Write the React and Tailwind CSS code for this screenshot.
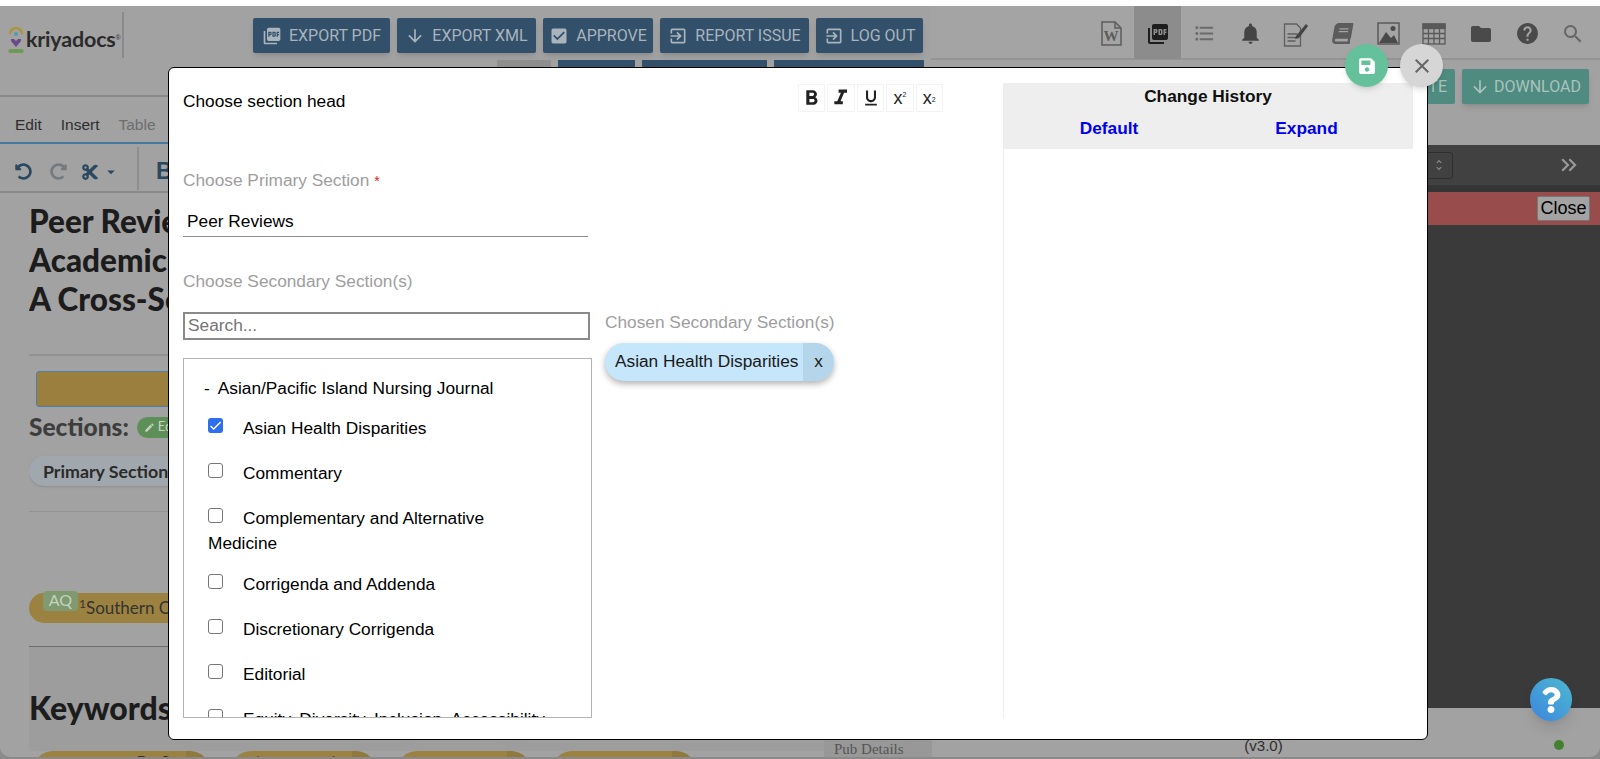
import {
  MdPictureAsPdf, MdArrowDownward, MdCheckBox, MdExitToApp, MdFormatListBulleted, MdNotifications,
  MdFolder, MdHelp, MdSearch, MdClose, MdArrowDropDown,
  MdEdit, MdFormatBold, MdFormatItalic, MdFormatUnderlined, MdKeyboardDoubleArrowRight, MdUnfoldMore, MdCheck,
} from 'react-icons/md'
import { FaSave, FaBook, FaQuestion, FaUndoAlt, FaRedoAlt, FaCut } from 'react-icons/fa'

const TOP_BUTTONS = [
  { label: 'EXPORT PDF', icon: MdPictureAsPdf, w: 'w-[137px]' },
  { label: 'EXPORT XML', icon: MdArrowDownward, w: 'w-[139px]' },
  { label: 'APPROVE', icon: MdCheckBox, w: 'w-[110px]' },
  { label: 'REPORT ISSUE', icon: MdExitToApp, w: 'w-[149px]' },
  { label: 'LOG OUT', icon: MdExitToApp, w: 'w-[107px]' },
]

const SECTIONS = [
  { label: 'Commentary' },
  { label: 'Complementary and Alternative Medicine', tight: true },
  { label: 'Corrigenda and Addenda' },
  { label: 'Discretionary Corrigenda' },
  { label: 'Editorial' },
  { label: 'Equity, Diversity, Inclusion, Accessibility' },
]

const FORMAT_BOX = 'w-[27.4px] h-[28px] border border-[#f3f3f3] flex items-center justify-center'

function Logo() {
  return (
    <div className="flex items-center pl-[8px] pt-[8px]">
      <svg width="16" height="28" viewBox="0 0 16 28" className="mr-[2px] shrink-0">
        <path d="M2 9a6 6 0 0 1 12 0" fill="none" stroke="#a8973e" strokeWidth="2.6" />
        <circle cx="8" cy="9" r="2" fill="#4a9fb0" />
        <path d="M3 14h3l2 2 2-2h3v2l-5 6-5-6z" fill="#6a4a8a" />
        <rect x="0.5" y="24" width="15" height="4" rx="1.5" fill="#6f9a55" />
      </svg>
      <span className="text-[21.5px] font-bold text-[#2b2b2b] font-['Lato',sans-serif] tracking-[-0.2px]">kriyadocs</span>
      <span className="text-[7px] text-[#333] self-start mt-[10px]">®</span>
    </div>
  )
}

function HeaderIcons() {
  const slot = 'w-[46px] flex justify-center mt-[3px]'
  return (
    <div className="ml-auto w-[669px] h-full bg-[#a4a4a4] border-b-2 border-[#949494] flex items-center justify-end pr-[4px]">
      <div className={slot}>
        <svg width="21" height="25" viewBox="0 0 21 25" fill="none" stroke="#5c5c5c" strokeWidth="1.5">
          <path d="M1 1h13l6 6v17H1z" />
          <path d="M14 1v6h6" />
          <text x="10" y="20" fontSize="15" fontWeight="700" fontFamily="Liberation Serif, serif" textAnchor="middle" fill="#5c5c5c" stroke="none">W</text>
        </svg>
      </div>
      <div className="w-[47px] h-[54px] pt-[3px] bg-[#8c8c8c] flex items-center justify-center">
        <MdPictureAsPdf size={24} className="text-[#1e1e1e]" />
      </div>
      <div className={slot}><MdFormatListBulleted size={23} className="text-[#6a6a6a]" /></div>
      <div className={slot}><MdNotifications size={25} className="text-[#444]" /></div>
      <div className={slot}>
        <svg width="27" height="26" viewBox="0 0 27 26" fill="none" stroke="#5f5f5f" strokeWidth="1.3">
          <path d="M1.5 3h12l4 4v18h-16z" />
          <path d="M4.5 13h10M4.5 16.500h10M4.500 20h8" />
          <path d="M13 15l10-12 2 2-9 12-4 1z" fill="#444" stroke="none" />
        </svg>
      </div>
      <div className={slot}><FaBook size={21} className="text-[#5c5c5c] -skew-x-[10deg]" /></div>
      <div className={slot}>
        <svg width="23" height="23" viewBox="0 0 23 23" fill="none">
          <rect x="1" y="1" width="21" height="21" stroke="#555" strokeWidth="1.4" />
          <path d="M2 21l7-11 5 6 3-3 4 8z" fill="#4a4a4a" />
          <circle cx="16" cy="6.500" r="2.500" fill="#4a4a4a" />
        </svg>
      </div>
      <div className={slot}>
        <svg width="24" height="22" viewBox="0 0 24 22" fill="none" stroke="#5a5a5a" strokeWidth="1.3">
          <rect x="1" y="1" width="22" height="20" />
          <rect x="1" y="1" width="22" height="4.500" fill="#5a5a5a" />
          <path d="M1 10.500h22M1 15.500h22M6.500 5v16M12 5v16M17.500 5v16" />
        </svg>
      </div>
      <div className="w-[47px] flex justify-center mt-[3px]"><MdFolder size={24} className="text-[#4a4a4a]" /></div>
      <div className={slot}><MdHelp size={25} className="text-[#4a4a4a]" /></div>
      <div className={slot}><MdSearch size={24} className="text-[#666]" /></div>
    </div>
  )
}

function CheckRow({ label, checked, tight }) {
  return (
    <div className={`mt-[20px] leading-[25px] text-[17.3px] text-black ${tight ? 'mb-[-4px]' : ''}`}>
      <span className={`inline-block align-[1px] w-[15px] h-[15px] rounded-[3px] mr-[20px] ${checked ? 'bg-[#2f6fed]' : 'border border-[#767676] bg-white'}`}>
        {checked && <MdCheck size={15} className="text-white" />}
      </span>
      {label}
    </div>
  )
}

export default function App() {
  return (
    <div className="relative w-[1600px] h-[759px] overflow-hidden bg-[#8a8a8a] font-['Liberation_Sans',sans-serif]">
      <div className="h-[6px] bg-white" />

      {/* app behind the overlay */}
      <div className="h-[751px] bg-[#a2a2a2] rounded-b-[10px] overflow-hidden flex flex-col">
        <div className="h-[54px] flex shrink-0">
          <div className="w-[124px] h-[46px] mt-[6px] border-r-2 border-[#8a8a8a] flex items-center"><Logo /></div>
          <div className="ml-[129px] flex gap-[7px] pt-[12px]">
            {TOP_BUTTONS.map(b => (
              <div key={b.label} className={`${b.w} h-[35px] rounded-[2px] bg-[#32506a] shadow-md flex items-center justify-center gap-[7px] text-[16px] text-[#a9b4bd] font-['Roboto',sans-serif] whitespace-nowrap`}>
                <b.icon size={20} className="shrink-0" />
                <span>{b.label}</span>
              </div>
            ))}
          </div>
          <HeaderIcons />
        </div>

        <div className="flex flex-1 min-h-0">
          {/* left pane */}
          <div className="w-[1000px] flex flex-col min-h-0">
            <div className="h-[37px] shrink-0 border-b-2 border-[#8a8a8a] flex gap-[7px] pl-[497px] overflow-hidden">
              <div className="w-[54px] h-[30px] rounded-[2px] bg-[#8e8e8e] mt-[-1px]" />
              <div className="w-[77px] h-[30px] rounded-[2px] bg-[#32506a] mt-[-1px]" />
              <div className="w-[125px] h-[30px] rounded-[2px] bg-[#32506a] mt-[-1px]" />
              <div className="w-[150px] h-[30px] rounded-[2px] bg-[#32506a] mt-[-1px]" />
            </div>
            <div className="h-[47px] shrink-0 border-b-2 border-[#44799f] flex items-center gap-[19px] pl-[15px] pt-[11px] text-[15.5px] text-[#2e2e2e]">
              <span>Edit</span><span>Insert</span><span className="text-[#6e6e6e]">Table</span>
            </div>
            <div className="h-[49px] shrink-0 border-b-2 border-[#8a8a8a] flex items-center pl-[15px] pt-[8px] text-[#2a4860]">
              <FaUndoAlt size={17} />
              <FaRedoAlt size={17} className="ml-[18px] text-[#747a80]" />
              <FaCut size={18} className="ml-[14px]" />
              <MdArrowDropDown size={18} className="ml-[3px]" />
              <div className="h-[43px] mt-[-6px] border-l-2 border-[#8e8e8e] ml-[17px] mr-[17px]" />
              <span className="font-bold text-[23px]">B</span>
            </div>

            <div className="flex-1 min-h-0 overflow-hidden pl-[29px] pr-[68px] font-['Lato',sans-serif] text-[#1c1c1c]">
              <div className="w-[139px] overflow-hidden">
                <h1 className="mt-[9px] text-[31.5px] leading-[39px] font-black whitespace-nowrap">
                  Peer Reviewers in<br />Academic Journals:<br />A Cross-Sectional Study
                </h1>
                <div className="mt-[35px] border-t-2 border-[#929292]" />
                <div className="mt-[15px] ml-[7px] w-[300px] h-[36px] rounded-[3px] bg-[#9a7f3f] border border-[#4f7fa8]" />
                <div className="mt-[6px] flex items-center gap-[8px] whitespace-nowrap">
                  <span className="text-[24.5px] font-black text-[#3d3d3d] leading-[28px]">Sections:</span>
                  <span className="h-[21px] pl-[7px] pr-[12px] rounded-full bg-[#5f8f58] flex items-center gap-[3px] text-[13px] text-[#c5d6c0]"><MdEdit size={11} />Edit</span>
                </div>
                <div className="mt-[15px] w-[300px] h-[30px] rounded-full bg-[#a0a8ad] shadow-sm flex items-center pl-[14px] text-[17.8px] font-bold text-[#2b2b2b]">Primary Section</div>
                <div className="mt-[25px] border-t border-[#929292]" />
                <div className="mt-[81px] relative w-[400px] h-[30px] rounded-full bg-[#9c8240] flex items-center pl-[50px] text-[17px] text-[#333]">
                  <span className="absolute left-[14px] top-[-2px] w-[35px] h-[20px] rounded-[4px] bg-[#7f9a70] text-[16px] text-[#c4d2bd] text-center leading-[18px]">AQ</span>
                  <span><sup className="text-[12px]">1</sup>Southern California</span>
                </div>
                <div className="mt-[23px] border-t border-[#6e6e6e]" />
              </div>
              <div className="bg-[#9d9d9d] h-[104px] pt-[43px]">
                <div className="text-[32px] leading-[36px] font-black w-[139px] overflow-hidden">Keywords</div>
              </div>
              <div className="relative flex h-[20px] pl-[4px] gap-[21px]">
                <span className="w-[177px] h-[20px] rounded-t-full bg-[#9c8240] border-r-[24px] border-[#8f7a3c]" />
                <span className="w-[145px] h-[20px] rounded-t-full bg-[#9c8240] border-r-[24px] border-[#8f7a3c]" />
                <span className="w-[134px] h-[20px] rounded-t-full bg-[#9c8240] border-r-[24px] border-[#8f7a3c]" />
                <span className="w-[144px] h-[20px] rounded-t-full bg-[#9c8240] border-r-[24px] border-[#8f7a3c]" />
                <span className="absolute left-[108px] top-[3px] text-[14px] leading-[16px] font-['Liberation_Mono',monospace] text-[#333] whitespace-nowrap">Em Dn press ⌘ to comment</span>
                <span className="ml-auto mt-[-12px] h-[22px] w-[108px] bg-[#989898] pl-[10px] text-[15px] leading-[20px] font-['Liberation_Serif',serif] text-[#555]">Pub Details</span>
              </div>
            </div>
          </div>

          {/* right pane */}
          <div className="w-[600px] flex flex-col min-h-0">
            <div className="h-[85px] shrink-0 flex justify-end gap-[7px] pt-[9px] pr-[11px] font-['Roboto',sans-serif] text-[16px] text-[#a9c3bd]">
              <div className="w-[60px] h-[35px] rounded-[2px] bg-[#4f8b80] flex items-center justify-end pr-[8px]">TE</div>
              <div className="w-[127px] h-[35px] rounded-[2px] bg-[#4f8b80] shadow-md flex items-center justify-center gap-[4px] whitespace-nowrap"><MdArrowDownward size={20} />DOWNLOAD</div>
            </div>
            <div className="h-[563px] shrink-0 bg-[#3a3a3a] flex flex-col">
              <div className="h-[40px] shrink-0 bg-[#414141] flex items-center justify-end pr-[18px]">
                <div className="w-[28px] h-[27px] mr-[103px] rounded-[3px] border border-[#2e2e2e] flex items-center justify-center text-[#8a8a8a]"><MdUnfoldMore size={14} /></div>
                <MdKeyboardDoubleArrowRight size={26} className="text-[#9a9a9a]" />
              </div>
              <div className="h-[7px] shrink-0 bg-[#353535]" />
              <div className="h-[33px] shrink-0 bg-[#994c4c] flex items-center justify-end pr-[10px]">
                <div className="w-[53px] h-[25px] bg-[#a3a3a3] border border-[#777] rounded-[2px] text-[18px] leading-[22px] text-center text-black">Close</div>
              </div>
            </div>
            <div className="flex-1 relative text-center pt-[27px] text-[15px] leading-[22px] text-[#2e2e2e]">
              <span className="ml-[-73px]">(v3.0)</span>
              <span className="absolute left-[-28px] top-[47px] text-[16px] leading-[18px] text-[#222] whitespace-nowrap">1 1 x 7:xxx</span>
              <span className="absolute right-[36px] top-[32px] w-[10px] h-[10px] rounded-full bg-[#43802f]" />
            </div>
          </div>
        </div>
      </div>

      {/* section head dialog */}
      <div className="absolute left-[168px] top-[67px] w-[1260px] h-[673px] bg-white border border-black rounded-[6px] text-black">
        <div className="flex h-full">
          <div className="w-[834px] shrink-0 pl-[14px] pt-[15px] flex flex-col">
            <div className="flex items-start justify-between pr-[60px]">
              <span className="text-[17.3px] leading-[36px]">Choose section head</span>
              <div className="flex gap-[2px] mt-[1px] text-[#222]">
                <span className={FORMAT_BOX}><MdFormatBold size={25} /></span>
                <span className={FORMAT_BOX}><MdFormatItalic size={26} /></span>
                <span className={FORMAT_BOX}><MdFormatUnderlined size={20} /></span>
                <span className={`${FORMAT_BOX} text-[18px] leading-none`}>x<sup className="text-[7px]">2</sup></span>
                <span className={`${FORMAT_BOX} text-[18px] leading-none`}>x<sub className="text-[7px]">2</sub></span>
              </div>
            </div>
            <div className="mt-[49px] text-[17.3px] leading-[24px] text-[#9e9e9e]">Choose Primary Section <span className="text-[#e02020] text-[14px]">*</span></div>
            <div className="mt-[12px] w-[405px] h-[32px] border-b border-[#8e8e8e] pl-[4px] text-[17.3px] leading-[32px]">Peer Reviews</div>
            <div className="mt-[32px] text-[17.3px] leading-[24px] text-[#9e9e9e]">Choose Secondary Section(s)</div>
            <div className="flex flex-1 min-h-0">
              <div className="w-[409px] shrink-0 flex flex-col min-h-0">
                <div className="mt-[19px] w-[407px] h-[28px] border-2 border-[#8a8a8a] pl-[3px] text-[17.3px] leading-[22px] text-[#757575]">Search...</div>
                <div className="mt-[18px] h-[360px] border border-[#b4b4b4] overflow-hidden pl-[24px] pr-[41px] pt-[17px]">
                  <div className="ml-[-4px] text-[17.3px] leading-[25px] whitespace-nowrap"><span className="mr-[8px]">-</span>Asian/Pacific Island Nursing Journal</div>
                  <div className="mt-[-5px]"><CheckRow label="Asian Health Disparities" checked /></div>
                  {SECTIONS.map(s => <CheckRow key={s.label} label={s.label} tight={s.tight} />)}
                </div>
              </div>
              <div className="ml-[13px]">
                <div className="mt-[17px] text-[17.3px] leading-[24px] text-[#9e9e9e] whitespace-nowrap">Chosen Secondary Section(s)</div>
                <div className="mt-[9px] w-[229px] h-[38px] rounded-full overflow-hidden bg-[#c5e6fb] shadow-[0_3px_6px_rgba(0,0,0,0.3)] flex items-center text-[17.3px] text-[#1a1a1a] whitespace-nowrap">
                  <span className="w-[198px] shrink-0 pl-[10px]">Asian Health Disparities</span>
                  <span className="flex-1 h-full bg-[#b5d5ea] flex items-center justify-center">x</span>
                </div>
              </div>
            </div>
            <div className="h-[21px] shrink-0" />
          </div>

          <div className="w-[410px] pt-[15px] shrink-0 flex flex-col">
            <div className="h-[66px] shrink-0 bg-[#eeeeee] text-center font-bold text-[17.3px]">
              <div className="pt-[1px] leading-[24px] text-[#111]">Change History</div>
              <div className="flex mt-[8px] leading-[24px] text-[#0000ee]">
                <span className="w-[212px]">Default</span>
                <span className="w-[183px]">Expand</span>
              </div>
            </div>
            <div className="h-[569px] border-l border-[#eeeeee]" />
          </div>
        </div>
      </div>

      <div className="absolute left-[1345px] top-[44px] w-[43px] h-[43px] rounded-full bg-[#65c19c] shadow-md flex items-center justify-center"><FaSave size={18} className="text-white" /></div>
      <div className="absolute left-[1400px] top-[44px] w-[43px] h-[43px] rounded-full bg-[#d6d6d6] shadow-md flex items-center justify-center"><MdClose size={24} className="text-[#666]" /></div>
      <div className="absolute left-[1530px] top-[678px] w-[42px] h-[43px] rounded-full bg-gradient-to-tr from-[#3d85dc] to-[#4fb8d0] shadow-lg flex items-center justify-center"><FaQuestion size={26} className="text-white" /></div>
    </div>
  )
}
